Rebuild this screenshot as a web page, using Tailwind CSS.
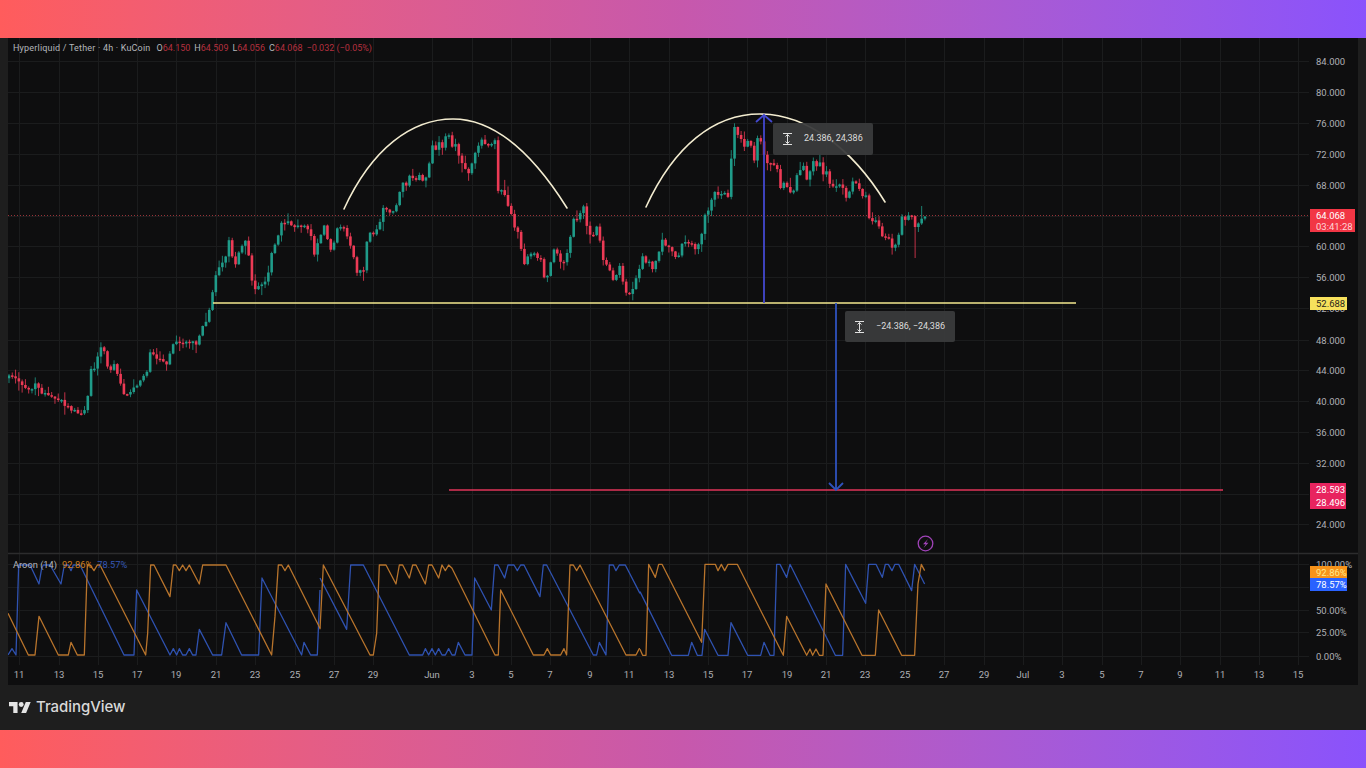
<!doctype html>
<html>
<head>
<meta charset="utf-8">
<title>Hyperliquid chart</title>
<script src="https://cdn.jsdelivr.net/npm/@tailwindcss/browser@4"></script>
</head>
<body class="m-0 bg-[#1e1e1e]">
<div class="flex flex-col w-[1366px] h-[768px] overflow-hidden bg-[#1e1e1e] font-['Roboto',sans-serif]">
  <div class="h-[38px] shrink-0 bg-linear-to-r from-[#ff5c5c] via-[#c758ac] to-[#8a52fc]"></div>

  <div class="flex-1 flex flex-col px-[8px] min-h-0">
    <div class="relative w-[1350px] h-[647px] shrink-0 bg-[#0e0e0f] overflow-hidden">
      <svg id="chart" class="absolute inset-0 block" width="1350" height="647" viewBox="8 38 1350 647" xmlns="http://www.w3.org/2000/svg" font-family="Roboto, sans-serif" font-size="9.5" fill="#aeb0b5">
        <g stroke="#1b1c1d" stroke-width="1" fill="none">
          <path d="M8 61.500H1309M8 92.500H1309M8 123.500H1309M8 154.500H1309M8 185.500H1309M8 216.500H1309M8 246.500H1309M8 277.500H1309M8 308.500H1309M8 340.500H1309M8 370.500H1309M8 401.500H1309M8 432.500H1309M8 463.500H1309M8 494.500H1309M8 524.500H1309"/>
          <path d="M8 564.500H1309M8 587.500H1309M8 610.500H1309M8 632.500H1309M8 656.500H1309"/>
          <path d="M19.500 38V665M59.500 38V665M98.500 38V665M137.500 38V665M176.500 38V665M216.500 38V665M255.500 38V665M295.500 38V665M334.500 38V665M373.500 38V665M432.500 38V665M472.500 38V665M511.500 38V665M550.500 38V665M590.500 38V665M629.500 38V665M669.500 38V665M708.500 38V665M747.500 38V665M787.500 38V665M826.500 38V665M865.500 38V665M905.500 38V665M944.500 38V665M984.500 38V665M1023.500 38V665M1062.500 38V665M1102.500 38V665M1141.500 38V665M1180.500 38V665M1220.500 38V665M1259.500 38V665M1298.500 38V665"/>
        </g>
        <path d="M8 553.500H1358" stroke="#2c2c2d" stroke-width="1.500" fill="none"/>

        <path d="M8 215.500H1309" stroke="#b23a3f" stroke-opacity=".85" stroke-width="1" stroke-dasharray="1 2" fill="none"/>

        <g id="candles"></g>

        <g fill="none" stroke="#f3ecd0" stroke-width="1.600" stroke-linecap="round">
          <path d="M344 209C372 148 412 119 453 119C496 119 535 157 567 208"/>
          <path d="M646 207C674 146 714 114 760 114C806 114 852 148 885 202"/>
        </g>
        <path d="M213 303H1076" stroke="#f5e88f" stroke-width="1.600" fill="none"/>
        <path d="M449 490H1223" stroke="#e0355a" stroke-width="1.600" fill="none"/>
        <g fill="none" stroke="#4348cf" stroke-width="1.800">
          <path d="M764 303V115M756 122L764 115L772 122"/>
        </g>
        <g fill="none" stroke="#2f52bd" stroke-width="1.800">
          <path d="M836 303V490M829 483L836 490L843 483"/>
        </g>

        <g fill="none" stroke-width="1.300" stroke-linejoin="round">
          <g stroke="#2f52b0">
            <polyline transform="translate(0 550) scale(.3333)" vector-effect="non-scaling-stroke" points="24,315 36,296 48,315 56,45 90,45 117,102 125,55 130,45 150,45 183,102 193,45 205,45 213,62 220,45 240,45 372,315 402,315 410,120 510,315 520,296 530,315 538,296 548,315 558,315 568,296 578,315 588,315 598,238 638,315 665,315 678,218 725,315 776,315 786,84 905,315 912,277 932,315 952,315 960,120"/>
            <polyline transform="translate(320 550) scale(.3333)" vector-effect="non-scaling-stroke" points="0,84 80,238 92,45 130,45 268,315 308,315 316,296 326,315 336,296 346,315 356,296 366,315 376,315 386,296 396,315 405,315 415,277 435,315 456,315 464,84 514,180 524,45 534,45 554,84 564,45 582,45 592,62 602,45 612,45 660,140 670,45 680,45 820,315 830,315 838,277 858,315 868,45 880,45 888,62 898,45 916,45 960,130"/>
            <polyline transform="translate(640 530) scale(.3333)" vector-effect="non-scaling-stroke" points="0,185 95,376 145,376 155,337 172,376 186,376 194,298 234,376 264,376 273,278 323,376 362,376 372,337 390,376 402,376 410,103 420,103 440,142 450,103 586,376 608,376 617,103 677,220 686,103 708,103 727,142 736,103 745,103 756,122 765,103 776,103 815,182 824,103 854,162"/>
          </g>
          <g stroke="#b8742c">
            <polyline transform="translate(0 550) scale(.3333)" vector-effect="non-scaling-stroke" points="24,190 85,315 105,315 117,199 175,315 205,315 213,277 232,315 253,315 262,45 270,45 282,62 292,45 300,45 437,315 443,250 452,45 462,45 510,140 520,45 528,45 538,62 548,45 558,62 568,45 598,102 608,45 678,45 815,315 825,200 835,45 845,45 855,62 865,45 960,235"/>
            <polyline transform="translate(320 550) scale(.3333)" vector-effect="non-scaling-stroke" points="0,238 10,45 150,315 160,315 170,250 178,45 198,45 228,102 238,45 248,45 268,84 278,45 288,45 316,102 326,45 336,45 356,84 366,45 376,62 386,45 396,55 525,315 535,315 542,120 640,315 672,315 682,296 692,315 722,315 732,296 740,315 750,45 760,45 770,62 780,45 918,315 948,315 958,296 960,296"/>
            <polyline transform="translate(640 530) scale(.3333)" vector-effect="non-scaling-stroke" points="0,358 8,376 18,376 26,103 46,142 56,103 66,103 185,337 195,103 226,103 234,122 244,103 254,122 264,103 292,103 430,376 440,259 500,376 510,357 518,376 528,357 538,376 549,376 558,162 666,376 706,376 716,240 785,376 824,376 834,162 844,103 854,122"/>
          </g>
        </g>

        <g text-anchor="start">
          <text x="1316" y="65">84.000</text><text x="1316" y="96">80.000</text><text x="1316" y="127">76.000</text><text x="1316" y="158">72.000</text><text x="1316" y="189">68.000</text><text x="1316" y="250">60.000</text><text x="1316" y="281">56.000</text><text x="1316" y="312">52.000</text><text x="1316" y="344">48.000</text><text x="1316" y="374">44.000</text><text x="1316" y="405">40.000</text><text x="1316" y="436">36.000</text><text x="1316" y="467">32.000</text><text x="1316" y="528">24.000</text>
          <text x="1316" y="568">100.00%</text><text x="1316" y="614">50.00%</text><text x="1316" y="636">25.00%</text><text x="1316" y="660">0.00%</text>
        </g>
        <g text-anchor="middle">
          <text x="19" y="678">11</text><text x="59" y="678">13</text><text x="98" y="678">15</text><text x="137" y="678">17</text><text x="176" y="678">19</text><text x="216" y="678">21</text><text x="255" y="678">23</text><text x="295" y="678">25</text><text x="334" y="678">27</text><text x="373" y="678">29</text><text x="432" y="678">Jun</text><text x="472" y="678">3</text><text x="511" y="678">5</text><text x="550" y="678">7</text><text x="590" y="678">9</text><text x="629" y="678">11</text><text x="669" y="678">13</text><text x="708" y="678">15</text><text x="747" y="678">17</text><text x="787" y="678">19</text><text x="826" y="678">21</text><text x="865" y="678">23</text><text x="905" y="678">25</text><text x="944" y="678">27</text><text x="984" y="678">29</text><text x="1023" y="678">Jul</text><text x="1062" y="678">3</text><text x="1102" y="678">5</text><text x="1141" y="678">7</text><text x="1180" y="678">9</text><text x="1220" y="678">11</text><text x="1259" y="678">13</text><text x="1298" y="678">15</text>
        </g>

        <circle cx="925.500" cy="543.500" r="7.300" fill="none" stroke="#a043b8" stroke-width="1.300"/>
        <path d="M928 539L923 544.200H925.700L923.500 548L928.500 542.800H925.800Z" fill="#a043b8"/>
      </svg>

      <div class="absolute left-[5px] top-[5px] flex gap-[4px] text-[9px] leading-[11px] whitespace-nowrap text-[#b4b6bb]">
        <span class="tracking-[0.19px] mr-[2px]">Hyperliquid / Tether · 4h · KuCoin</span>
        <span>O<span class="text-[#b5303f]">64.150</span></span>
        <span>H<span class="text-[#b5303f]">64.509</span></span>
        <span>L<span class="text-[#b5303f]">64.056</span></span>
        <span>C<span class="text-[#b5303f]">64.068</span></span>
        <span class="text-[#b5303f]">−0.032 (−0.05%)</span>
      </div>
      <div class="absolute left-[5px] top-[521px] flex gap-[5px] text-[9.3px] leading-[11px] whitespace-nowrap text-[#b4b6bb]">
        <span>Aroon (14)</span>
        <span class="text-[#d0801f]">92.86%</span>
        <span class="text-[#3557b5]">78.57%</span>
      </div>

      <div class="absolute left-[765px] top-[85px] w-[100px] h-[32px] flex items-center gap-[12px] pl-[10px] rounded-[2px] bg-[#3a3b3c]/95 text-[9px] text-[#dcdcdc] whitespace-nowrap">
        <svg width="9" height="12" viewBox="0 0 9 12" fill="none" stroke="#e0e0e0" stroke-width="1"><path d="M0 .5H9M0 11.500H9M4.500 1.500V10.500M2.500 3.500L4.500 1.500L6.500 3.500M2.500 8.500L4.500 10.500L6.500 8.500"/></svg>
        <span>24.386, 24,386</span>
      </div>
      <div class="absolute left-[837px] top-[273px] w-[110px] h-[31px] flex items-center gap-[12px] pl-[10px] rounded-[2px] bg-[#3a3b3c]/95 text-[9px] text-[#dcdcdc] whitespace-nowrap">
        <svg width="9" height="12" viewBox="0 0 9 12" fill="none" stroke="#e0e0e0" stroke-width="1"><path d="M0 .5H9M0 11.500H9M4.500 1.500V10.500M2.500 3.500L4.500 1.500L6.500 3.500M2.500 8.500L4.500 10.500L6.500 8.500"/></svg>
        <span>−24.386, −24,386</span>
      </div>

      <div class="absolute left-[1302px] top-[171px] w-[45px] h-[23px] flex flex-col items-start pl-[6px] justify-center bg-[#f23645] text-[9.5px] leading-[11px] text-white">
        <span>64.068</span><span class="text-[#ffd5d8]">03:41:28</span>
      </div>
      <div class="absolute left-[1302px] top-[259px] w-[37px] h-[13px] flex items-center pl-[6px] bg-[#f7e15c] text-[9.5px] leading-[11px] text-[#26241a]">52.688</div>
      <div class="absolute left-[1302px] top-[445px] w-[36px] h-[26px] flex flex-col items-start pl-[6px] justify-center gap-[2px] bg-[#e8245f] text-[9.5px] leading-[11px] text-white">
        <span>28.593</span><span>28.496</span>
      </div>
      <div class="absolute left-[1302px] top-[528px] w-[37px] h-[12px] flex items-center pl-[6px] bg-[#f7931a] text-[9.5px] leading-[11px] text-[#ffe98a]">92.86%</div>
      <div class="absolute left-[1302px] top-[540px] w-[37px] h-[13px] flex items-center pl-[6px] bg-[#2962ff] text-[9.5px] leading-[11px] text-white">78.57%</div>
    </div>

    <div class="flex-1 flex items-center gap-[5px] pl-[1px] pb-[1px]">
      <svg width="22" height="11" viewBox="0 7 36 18" fill="#e4e4e4" xmlns="http://www.w3.org/2000/svg"><path d="M14 25H7V14H0V7h14v18zM28 25h-8l7.500-18h8L28 25z"/><circle cx="20" cy="11" r="4"/></svg>
      <span class="text-[15px] font-medium tracking-[-0.05px] text-[#d8d8d8] font-['Inter',sans-serif]">TradingView</span>
    </div>
  </div>

  <div class="h-[38px] shrink-0 bg-linear-to-r from-[#ff5c5c] via-[#c758ac] to-[#8a52fc]"></div>
</div>

<script>
(function(){
  var segs=[
   [0,290,[24,265,40,250,70,290,85,300,105,285,125,305,150,325,180,325,205,355,240,370,262,355,265,270,275,225,290,240,295,175,315,180,325,240,345,225,365,290,375,320,395,300,420,275,445,245,452,175,465,200,500,225,510,190,525,155,560,155,590,160,610,105,625,70,638,0]],
   [200,110,[50,490,75,440,85,385,100,470,125,395,140,390,150,490,165,535,195,525,210,455,235,370,250,340,265,320,290,375,300,330,335,385,345,430,370,350,390,425,415,360,435,365,450,410,470,475,490,480,500,385,530,370,550,285,570,310,590,280,600,230,640,200,680,200,695,105,725,110,745,80,770,120,810,195,830,100,860,90,885,100,890,230,920,260,945,370,960,380]],
   [500,190,[25,60,35,130,55,115,70,220,95,180,125,205,135,270,165,180,195,225,220,100,240,60,250,60,270,130,295,115,305,195,340,270,360,230,385,325,400,280,430,205,460,240,490,150,525,205,550,160,600,170,620,60,650,10,685,15]],
   [720,100,[15,290,25,220,40,80,60,100,75,155,85,105,100,190,115,105,135,180,170,190,180,260,200,250,215,290,230,225,245,195,265,235,285,180,330,240,345,265,370,260,380,315,400,250,440,300,450,355,495,405,525,445,545,350,580,360,590,400,605,345,615,345]]
  ];
  var pts=[];
  segs.forEach(function(s){
    for(var i=0;i<s[2].length;i+=2){
      var x=s[0]+s[2][i]/3,y=s[1]+s[2][i+1]/3;
      if(!pts.length||x>pts[pts.length-1][0]+0.5)pts.push([x,y]);
    }
  });
  var seed=73;
  function r(){seed=(seed*16807)%2147483647;return seed/2147483647;}
  function at(x){
    for(var i=1;i<pts.length;i++){
      if(x<=pts[i][0]){var a=pts[i-1],b=pts[i],t=(x-a[0])/(b[0]-a[0]);return a[1]+(b[1]-a[1])*t;}
    }
    return pts[pts.length-1][1];
  }
  var out='',prev=at(8),step=3.283;
  for(var x=9;x<925;x+=step){
    var amp=x<200?4:9;
    var c=at(x)+(r()-.5)*amp;
    var o=prev,top=Math.min(o,c),bot=Math.max(o,c);
    if(bot-top<1.5)bot=top+1.5;
    var hi=top-r()*r()*10-.5,lo=bot+r()*r()*10+.5;
    if(x>912&&x<916)lo=258;
    if(x>920&&x<924)hi=206;
    var col=c<o?'#1f9b89':'#ec3a55';
    out+='<path d="M'+x.toFixed(2)+' '+hi.toFixed(1)+'V'+lo.toFixed(1)+'" stroke="'+col+'" stroke-opacity=".8" stroke-width="1" fill="none"/>';
    out+='<rect x="'+(x-1.3).toFixed(2)+'" y="'+top.toFixed(1)+'" width="2.6" height="'+(bot-top).toFixed(1)+'" fill="'+col+'"/>';
    prev=c;
  }
  document.getElementById('candles').innerHTML=out;
})();
</script>
</body>
</html>
